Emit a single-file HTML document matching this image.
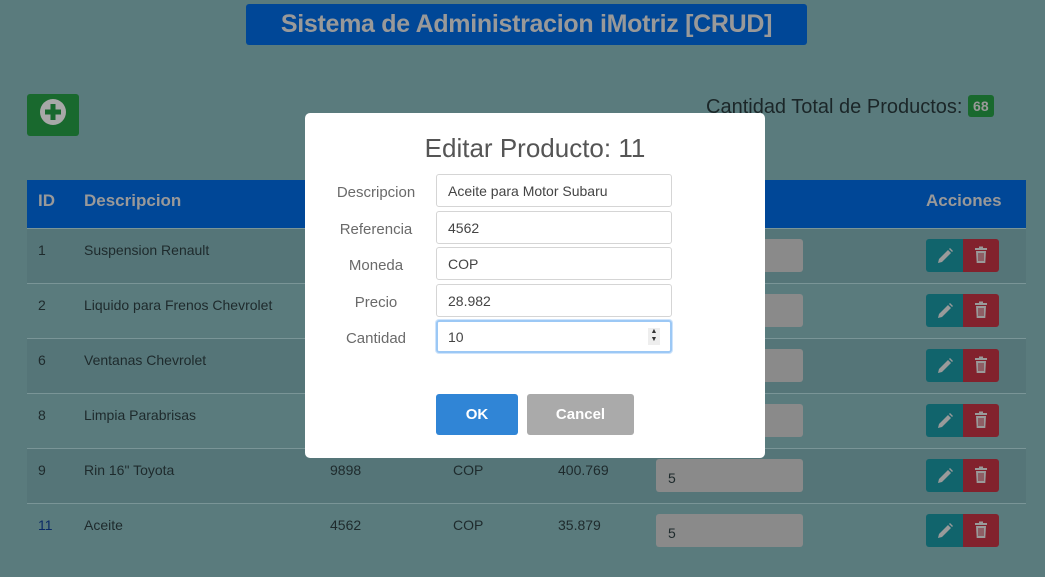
<!DOCTYPE html>
<html><head><meta charset="utf-8"><style>
*{box-sizing:border-box;margin:0;padding:0}
body{width:1045px;height:577px;background:#5a7b7d;font-family:"Liberation Sans",sans-serif;position:relative;overflow:hidden;color:#1e2a2c}
.abs{position:absolute}
.title{left:246px;top:4px;width:561px;height:41px;background:#004797;border-radius:3px;color:#999;font-weight:bold;font-size:25px;line-height:41px;text-align:center;letter-spacing:-0.3px;white-space:nowrap}
.add{left:27px;top:94px;width:52px;height:42px;background:#19692e;border-radius:3px}
.total{left:706px;top:95px;font-size:20px;color:#1b2628;white-space:nowrap}
.badge{display:inline-block;background:#19692e;color:#999;font-weight:bold;font-size:14px;padding:3px 5px;border-radius:3px;vertical-align:2px}
.thead{left:27px;top:180px;width:999px;height:48px;background:#004797;color:#999;font-weight:bold;font-size:17px;line-height:42px}
.row{left:27px;width:999px;height:55px;border-top:1px solid #7a9597;font-size:14px;line-height:42px}
.dark{background:#557578}
.inp{position:absolute;left:629px;top:10px;width:147px;height:33px;background:#8a8a8a;border-radius:3px;line-height:38px;padding-left:12px}
.ed{position:absolute;left:899px;top:10px;width:37px;height:33px;background:#11646c;border-radius:3px 0 0 3px}
.dl{position:absolute;left:936px;top:10px;width:36px;height:33px;background:#82222d;border-radius:0 3px 3px 0}
.ed svg,.dl svg{position:absolute;left:0;top:0}
.modal{left:305px;top:113px;width:460px;height:345px;background:#fff;border-radius:5px}
.mt{position:absolute;left:0;width:460px;top:20px;text-align:center;font-size:26px;color:#555}
.lab{position:absolute;left:10px;width:122px;text-align:center;font-size:15px;color:#6a6a6a}
.fi{position:absolute;left:131px;width:236px;height:33px;border:1px solid #d5d5d5;border-radius:3px;font-size:14px;color:#444;padding-left:11px;line-height:33px}
.btn{position:absolute;top:281px;height:41px;border-radius:3px;color:#fff;font-weight:bold;font-size:15px;text-align:center;line-height:41px}
</style></head><body>
<div class="abs title">Sistema de Administracion iMotriz [CRUD]</div>
<div class="abs add"><svg width="52" height="42"><circle cx="26" cy="18" r="13" fill="#a8a8a8"/><rect x="23.5" y="10" width="5" height="16" fill="#19692e"/><rect x="18" y="15.5" width="16" height="5" fill="#19692e"/></svg></div>
<div class="abs total">Cantidad Total de Productos: <span class="badge">68</span></div>
<div class="abs thead"><span class="abs" style="left:11px">ID</span><span class="abs" style="left:57px">Descripcion</span><span class="abs" style="left:899px">Acciones</span></div>

<svg width="0" height="0" style="position:absolute"><defs>
<g id="pen"><path d="M12 24 L13 20 L22 11 L25 14 L16 23 Z" fill="#9a9a9a"/><path d="M23 10 L24 9 L27 12 L26 13 Z" fill="#9a9a9a"/></g>
<g id="trash"><rect x="12" y="9" width="12" height="2" fill="#9a9a9a"/><rect x="16" y="7.5" width="4" height="2" fill="#9a9a9a"/><path d="M13 12 H23 L22.3 24 H13.7 Z" fill="#9a9a9a"/><rect x="15.5" y="14" width="1" height="8" fill="#82222d"/><rect x="17.5" y="14" width="1" height="8" fill="#82222d"/><rect x="19.5" y="14" width="1" height="8" fill="#82222d"/></g>
</defs></svg>

<div class="abs row dark" style="top:228px"><span class="abs" style="left:11px">1</span><span class="abs" style="left:57px">Suspension Renault</span><div class="inp"></div><div class="ed"><svg width="37" height="33"><use href="#pen"/></svg></div><div class="dl"><svg width="36" height="33"><use href="#trash"/></svg></div></div>
<div class="abs row" style="top:283px"><span class="abs" style="left:11px">2</span><span class="abs" style="left:57px">Liquido para Frenos Chevrolet</span><div class="inp"></div><div class="ed"><svg width="37" height="33"><use href="#pen"/></svg></div><div class="dl"><svg width="36" height="33"><use href="#trash"/></svg></div></div>
<div class="abs row dark" style="top:338px"><span class="abs" style="left:11px">6</span><span class="abs" style="left:57px">Ventanas Chevrolet</span><div class="inp"></div><div class="ed"><svg width="37" height="33"><use href="#pen"/></svg></div><div class="dl"><svg width="36" height="33"><use href="#trash"/></svg></div></div>
<div class="abs row" style="top:393px"><span class="abs" style="left:11px">8</span><span class="abs" style="left:57px">Limpia Parabrisas</span><div class="inp"></div><div class="ed"><svg width="37" height="33"><use href="#pen"/></svg></div><div class="dl"><svg width="36" height="33"><use href="#trash"/></svg></div></div>
<div class="abs row dark" style="top:448px"><span class="abs" style="left:11px">9</span><span class="abs" style="left:57px">Rin 16" Toyota</span><span class="abs" style="left:303px">9898</span><span class="abs" style="left:426px">COP</span><span class="abs" style="left:531px">400.769</span><div class="inp">5</div><div class="ed"><svg width="37" height="33"><use href="#pen"/></svg></div><div class="dl"><svg width="36" height="33"><use href="#trash"/></svg></div></div>
<div class="abs row" style="top:503px"><span class="abs" style="left:11px;color:#0a2a66">11</span><span class="abs" style="left:57px">Aceite</span><span class="abs" style="left:303px">4562</span><span class="abs" style="left:426px">COP</span><span class="abs" style="left:531px">35.879</span><div class="inp">5</div><div class="ed"><svg width="37" height="33"><use href="#pen"/></svg></div><div class="dl"><svg width="36" height="33"><use href="#trash"/></svg></div></div>

<div class="abs modal">
<div class="mt">Editar Producto: 11</div>
<div class="lab" style="top:71px">Descripcion</div><div class="fi" style="top:61px">Aceite para Motor Subaru</div>
<div class="lab" style="top:108px">Referencia</div><div class="fi" style="top:98px">4562</div>
<div class="lab" style="top:144px">Moneda</div><div class="fi" style="top:134px">COP</div>
<div class="lab" style="top:181px">Precio</div><div class="fi" style="top:171px">28.982</div>
<div class="lab" style="top:217px">Cantidad</div><div class="fi" style="top:207px;border:2px solid #9cc8f5;box-shadow:0 0 0 1px #cfe4fb;padding-left:10px;line-height:31px">10<span style="position:absolute;right:10px;top:6px;width:12px;height:17px;background:#eee;font-size:7px;line-height:8px;text-align:center;color:#333">▲<br>▼</span></div>
<div class="btn" style="left:131px;width:82px;background:#3085d6">OK</div>
<div class="btn" style="left:222px;width:107px;background:#aaa">Cancel</div>
</div>
</body></html>
